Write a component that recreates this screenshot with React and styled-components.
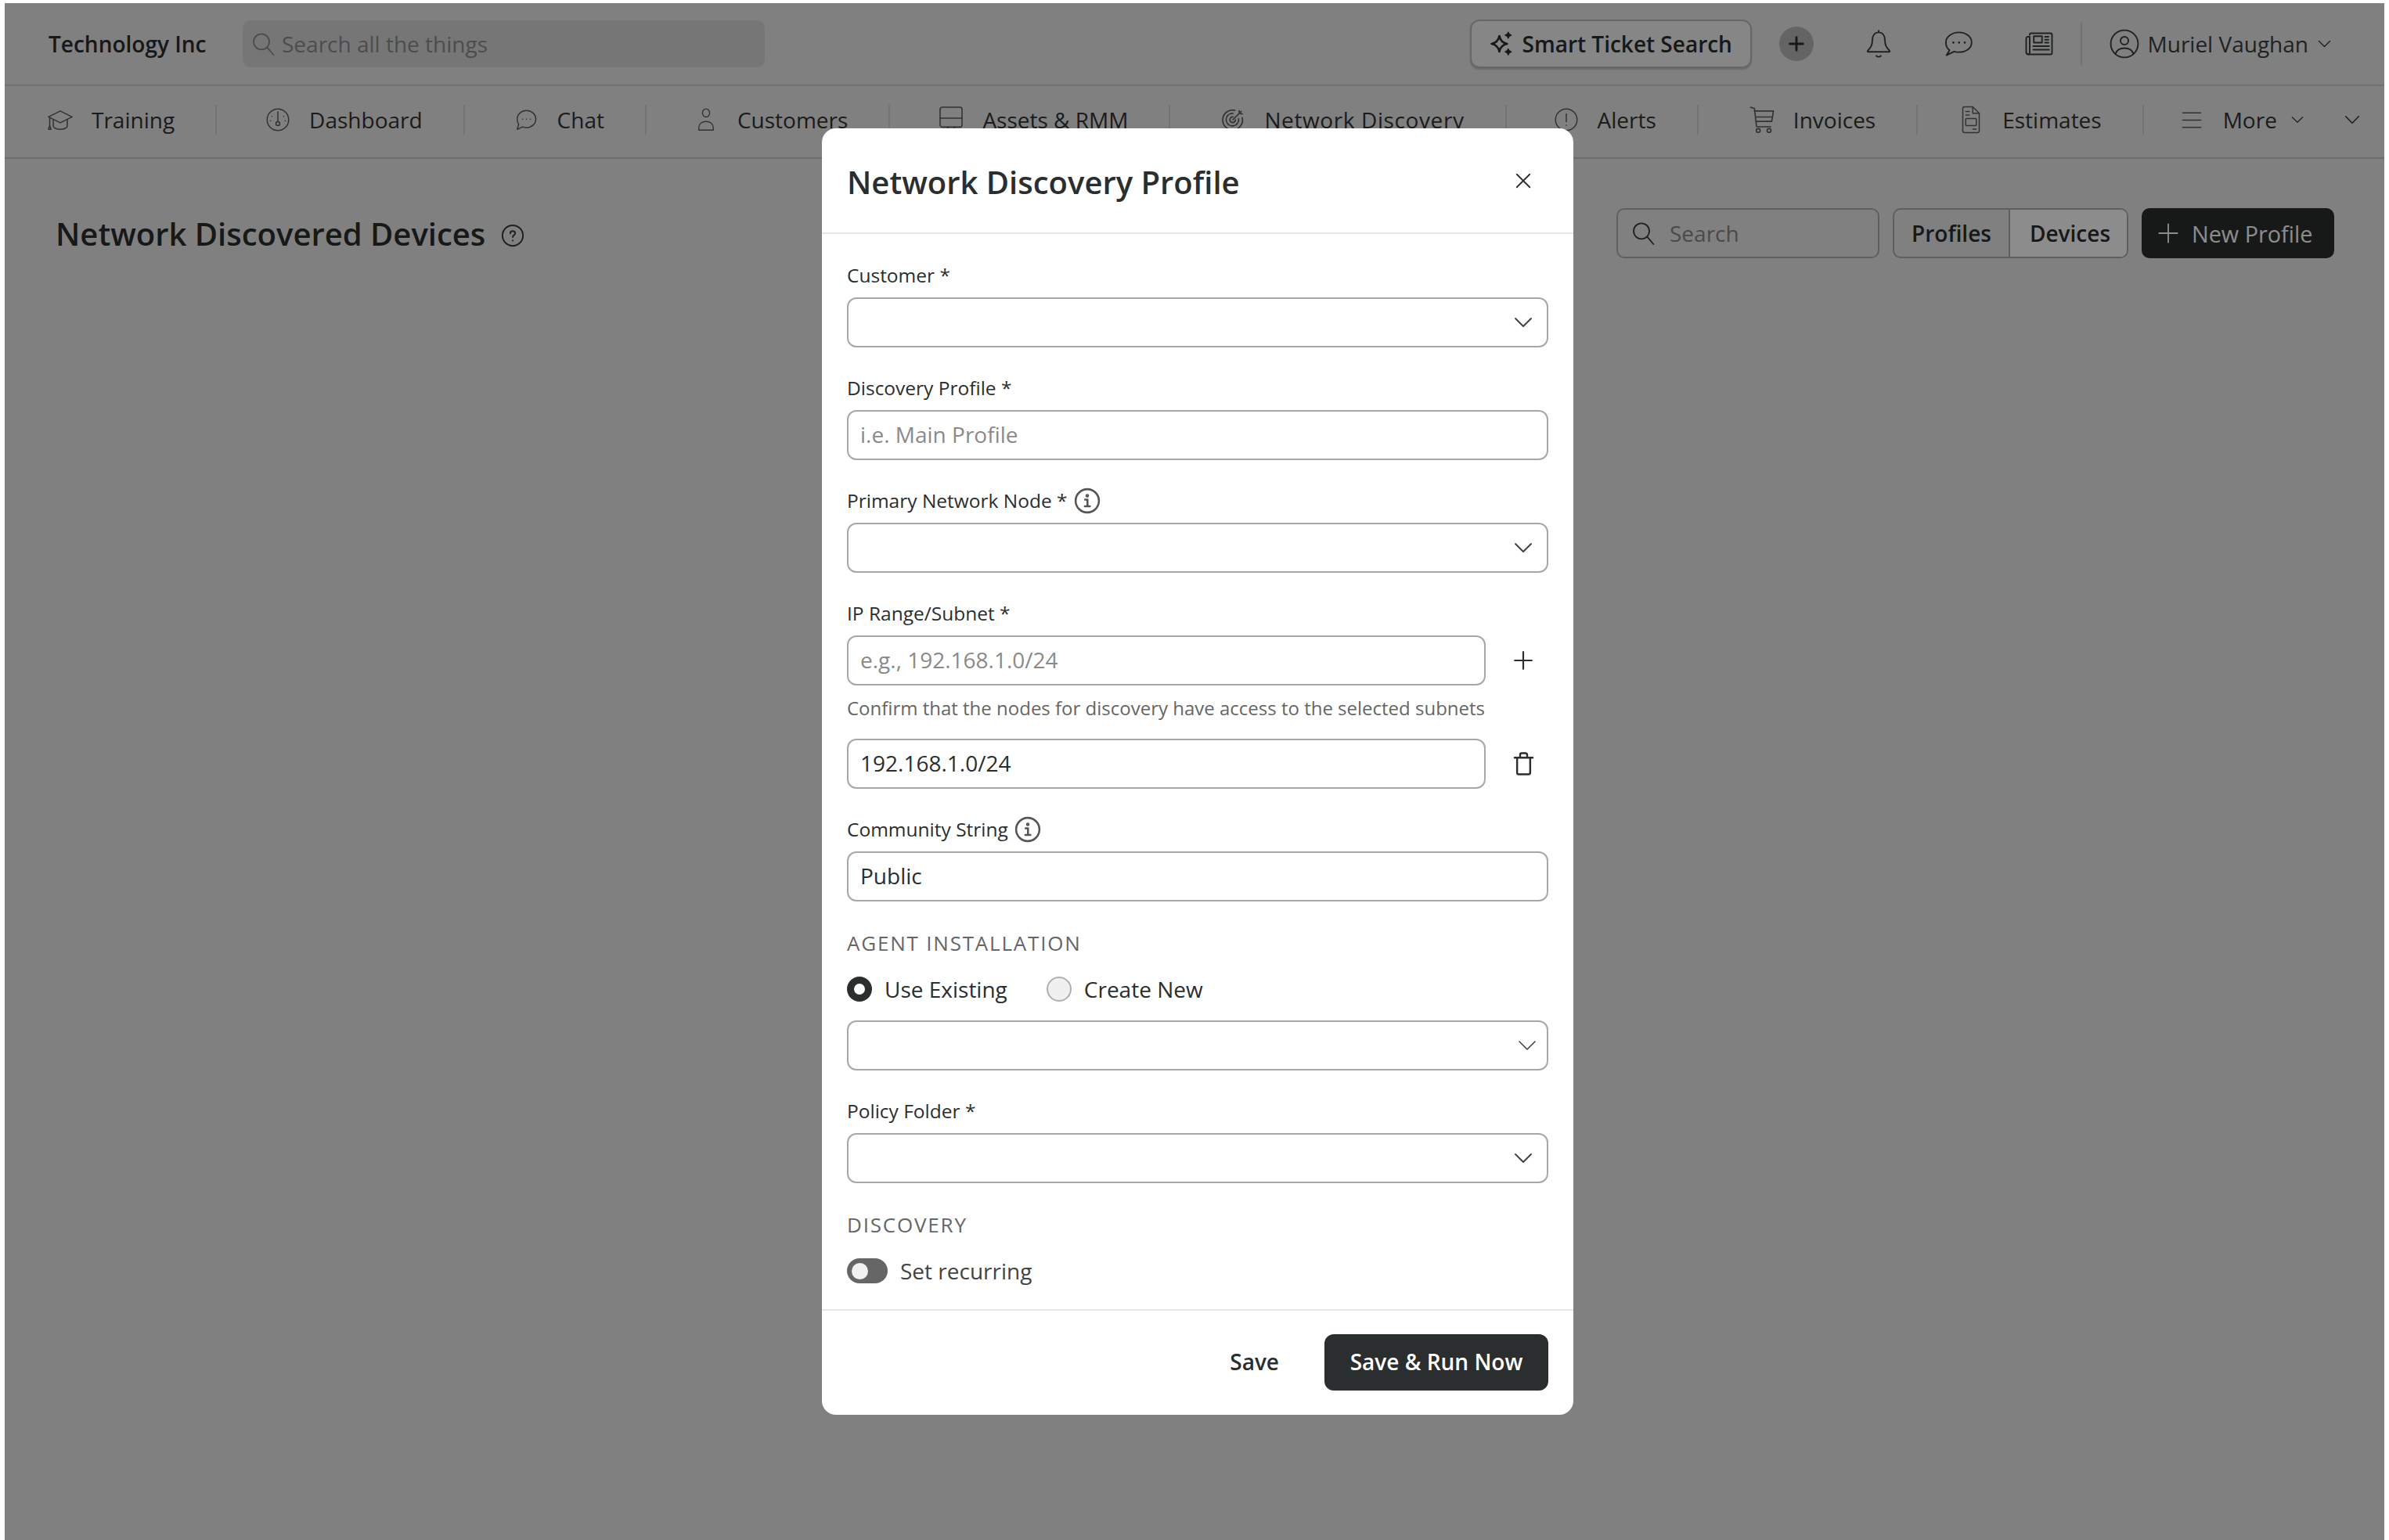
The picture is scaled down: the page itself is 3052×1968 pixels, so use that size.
import React from 'react';
import styled, { createGlobalStyle } from 'styled-components';

const Global = createGlobalStyle`
  * { box-sizing: border-box; }
  html, body { margin: 0; padding: 0; background: #fff; }
  body { font-family: "Open Sans", "Liberation Sans", sans-serif; color: #2a2e2e; }
  #root { padding: 4px 6px 0; }
`;

const Shell = styled.div`
  position: relative; height: 1964px; overflow: hidden; background: #e9e9e9;
`;
const TopBar = styled.header`
  display: flex; align-items: center; height: 106px; padding: 0 68px 0 56px;
  border-bottom: 2px solid #cfcfcf;
`;
const Brand = styled.div`
  width: 200px; margin-right: 48px; font-size: 28px; font-weight: 600; white-space: nowrap; color: #2a2e2e;
`;
const GlobalSearch = styled.div`
  display: flex; align-items: center; gap: 8px; width: 667px; height: 60px; padding: 0 10px;
  background: #d8d8d8; border-radius: 10px; font-size: 28px; color: #8c8c8c;
`;
const TopRight = styled.div`
  margin-left: auto; display: flex; align-items: center; height: 100%;
`;
const SmartButton = styled.div`
  display: flex; align-items: center; gap: 9px; width: 360px; height: 62px; padding-left: 22px;
  border: 2px solid #bcbcbc; border-radius: 12px; background: #f4f4f4; font-size: 28px; font-weight: 600;
  white-space: nowrap; box-shadow: 0 2px 2px rgba(0,0,0,.18);
`;
const PlusCircle = styled.div`
  display: flex; align-items: center; justify-content: center; width: 44px; height: 44px; margin: 0 66px 0 35px;
  border-radius: 50%; background: #b6b6b6; color: #2a2e2e;
`;
const IconRow = styled.div`
  display: flex; align-items: center; gap: 66px; color: #3a3e3e;
`;
const VRule = styled.div`
  width: 2px; height: 56px; margin: 0 35px; background: #d0d0d0;
`;
const UserName = styled.div`
  display: flex; align-items: center; gap: 12px; margin-left: 11px; font-size: 28px; color: #3a3e3e; white-space: nowrap;
`;
const Nav = styled.nav`
  display: flex; align-items: center; height: 93px; padding: 0 40px 5px 53px; border-bottom: 2px solid #c6c6c6;
`;
const NavItem = styled.div`
  display: flex; align-items: center; gap: 22px; height: 38px; padding: 0 52px 0 ${p => p.$lead ?? 60}px;
  border-left: 2px solid #d2d2d2; font-size: 28px; color: #333; white-space: nowrap;
  font-weight: ${p => (p.$active ? 500 : 400)};
  letter-spacing: ${p => (p.$active ? '.6px' : '0')};
  &:first-child { padding-left: 0; border-left: 0; }
`;
const NavIcon = styled.span`
  display: flex; align-items: center; justify-content: center; flex: none; width: 36px; color: #5c5c5c;
`;
const NavTail = styled.div`
  margin-left: auto; color: #333; display: flex;
`;
const NavMoreChevron = styled.span`
  display: flex; margin-left: -4px; color: #444;
`;
const PageHead = styled.section`
  display: flex; align-items: center; justify-content: space-between; height: 64px; margin-top: 63px; padding: 0 64px 0 65px;
`;
const Title = styled.h1`
  display: flex; align-items: center; gap: 20px; margin: 0; font-size: 40px; font-weight: 600; color: #2a2e2e; white-space: nowrap;
  svg { margin-top: 6px; color: #3a3e3e; }
`;
const HeadTools = styled.div`
  display: flex; align-items: center; gap: 17px;
`;
const PageSearch = styled.div`
  display: flex; align-items: center; gap: 18px; width: 336px; height: 64px; padding: 0 16px;
  border: 2px solid #aeaeae; border-radius: 10px; font-size: 28px; color: #888;
  svg { color: #3a3e3e; flex: none; }
`;
const Segment = styled.div`
  display: flex; width: 301px; height: 64px; border: 2px solid #aeaeae; border-radius: 10px; overflow: hidden;
`;
const SegmentOption = styled.div`
  display: flex; align-items: center; justify-content: center; flex: ${p => p.$w}px 0 0; font-size: 28px; font-weight: 600;
  background: ${p => (p.$on ? '#ffffff' : 'transparent')};
  border-left: ${p => (p.$on ? '2px solid #aeaeae' : '0')};
`;
const NewButton = styled.div`
  display: flex; align-items: center; gap: 16px; width: 246px; height: 64px; padding-left: 20px;
  background: #2a2e2e; border-radius: 10px; color: #fff; font-size: 28.8px; white-space: nowrap;
`;
const Overlay = styled.div`
  position: absolute; inset: 0; display: flex; justify-content: center; align-items: flex-start;
  padding: 160px 0 0 8px; background: rgba(0,0,0,.45);
`;
const Modal = styled.div`
  display: flex; flex-direction: column; width: 960px; height: 1644px; background: #fff; border-radius: 18px; overflow: hidden;
`;
const ModalHead = styled.div`
  display: flex; align-items: center; justify-content: space-between; height: 135px; padding: 3px 32px 0;
  border-bottom: 2px solid #e6e6e6; flex: none;
`;
const ModalTitle = styled.h2`
  margin: 0; font-size: 40px; font-weight: 600; color: #2a2e2e; white-space: nowrap;
`;
const CloseBox = styled.div`
  display: flex; width: 28px; justify-content: center; margin: 0 18px 2px 0; color: #2a2e2e;
`;
const ModalBody = styled.div`
  flex: 1; display: flex; flex-direction: column; padding: 39px 32px 0;
`;
const Field = styled.div`
  display: flex; flex-direction: column; margin-bottom: 38px;
`;
const Label = styled.label`
  display: flex; align-items: center; gap: 8px; height: 28px; padding-bottom: 2px; margin-bottom: 14px; font-size: 24.5px; color: #2a2e2e; white-space: nowrap;
  svg { color: #555; flex: none; margin-top: 2px; }
`;
const Box = styled.div`
  display: flex; align-items: center; justify-content: space-between; height: 64px; padding: 0 15px 2px;
  width: ${p => (p.$short ? '816px' : '100%')};
  border: 2px solid #a8a8a8; border-radius: 12px; font-size: 28px; color: ${p => (p.$ph ? '#8a8a8a' : '#2a2e2e')};
  svg { color: #444; margin-right: ${p => p.$chev ?? 0}px; margin-top: 2px; }
`;
const RangeRow = styled.div`
  display: flex; align-items: center; justify-content: space-between;
`;
const RowAction = styled.div`
  display: flex; justify-content: center; width: 36px; margin-right: 14px; color: #2a2e2e;
`;
const Helper = styled.div`
  height: 32px; margin: 13px 0 23px; font-size: 24px; line-height: 32px; color: #666; white-space: nowrap;
`;
const SectionLabel = styled.div`
  height: 30px; line-height: 30px; font-size: 26px; font-weight: 500; letter-spacing: 1.8px; color: #666; white-space: nowrap;
`;
const RadioRow = styled.div`
  display: flex; align-items: center; gap: 50px; height: 32px; margin: ${p => p.$m};
`;
const RadioItem = styled.div`
  display: flex; align-items: center; gap: 16px; font-size: 28px; color: #2a2e2e; white-space: nowrap;
`;
const RadioDot = styled.span`
  display: block; width: 32px; height: 32px; border-radius: 50%;
  background: ${p => (p.$on ? '#fff' : '#f0f0f0')};
  border: ${p => (p.$on ? '9px solid #2a2e2e' : '2px solid #b0b0b0')};
`;
const ToggleRow = styled.div`
  display: flex; align-items: center; gap: 16px; height: 32px; margin-top: 28px; font-size: 28px; color: #444; white-space: nowrap;
`;
const Toggle = styled.span`
  display: flex; align-items: center; width: 52px; height: 32px; padding-left: 6px; border-radius: 16px; background: #666;
  &::before { content: ""; width: 21px; height: 21px; border-radius: 50%; background: #f2f2f2; }
`;
const ModalFoot = styled.div`
  display: flex; align-items: center; justify-content: flex-end; gap: 58px; height: 135px; padding: 0 32px 2px;
  border-top: 2px solid #e6e6e6; flex: none;
`;
const GhostButton = styled.div`
  font-size: 28px; font-weight: 600; color: #2a2e2e; padding-bottom: 2px;
`;
const PrimaryButton = styled.div`
  display: flex; align-items: center; justify-content: center; width: 286px; height: 72px; padding-bottom: 2px; background: #2a2e2e; border-radius: 12px;
  color: #fff; font-size: 28px; font-weight: 600; white-space: nowrap;
`;

const Svg = ({ s = 24, w, h, sw = 1.5, vb = '0 0 24 24', children }) => (
  <svg width={w ?? s} height={h ?? s} viewBox={vb} fill="none" stroke="currentColor" strokeWidth={sw} strokeLinecap="round" strokeLinejoin="round">
    {children}
  </svg>
);
const Chevron = ({ w = 24, h = 14, sw = 2 }) => (
  <Svg w={w} h={h} vb="0 0 24 14" sw={sw}><path d="M2 2l10 10L22 2" /></Svg>
);
const SearchIcon = ({ s = 32 }) => (
  <Svg s={s} sw={1.4}><circle cx="10.500" cy="10" r="7.500" /><path d="M16 15.500l6 7" /></Svg>
);
const InfoIcon = () => (
  <Svg s={34} sw={1.8}><circle cx="12" cy="12" r="10.500" /><circle cx="12" cy="7.400" r=".7" /><path d="M10 11h2.200v6M9.800 17h4.600" /></Svg>
);
const Cap = () => (
  <Svg w={38} h={33} vb="0 0 26 24" sw={1.1}><path d="M13 3.500L24 9l-11 5.500L2 9z" /><path d="M6.500 11.500v6c0 1.600 3 3 6.500 3s6.500-1.400 6.500-3v-6" /><path d="M3.200 10v7" /><path d="M2 20.500l1.200-3.500 1.200 3.500z" /></Svg>
);
const Gauge = () => (
  <Svg s={30} vb="0 0 24 24" sw={1.2}><circle cx="12" cy="12" r="11" /><path d="M12 4v10" /><circle cx="12" cy="16" r="2" /><path d="M6 8.500v.1M18 8.500v.1M4.500 13v.1M19.500 13v.1" /></Svg>
);
const ChatNav = () => (
  <Svg s={30} sw={1.2}><path d="M12.500 2.500c5.200 0 9.500 3.900 9.500 8.800s-4.300 8.800-9.500 8.800c-1.300 0-2.700-.3-3.900-.8L3 21.800l1.500-5.200C3.400 15.100 3 13.200 3 11.300c0-4.900 4.300-8.800 9.500-8.800z" /><path d="M8.500 11.300v.1M12.500 11.300v.1M16.500 11.300v.1" /></Svg>
);
const Person = () => (
  <Svg w={26} h={30} vb="0 0 22 26" sw={1.2}><ellipse cx="11" cy="5.500" rx="4" ry="4.500" /><path d="M3 24.500v-3c0-4 3.500-6.500 8-6.500s8 2.500 8 6.500v3z" /></Svg>
);
const Monitor = () => (
  <Svg w={32} h={36} vb="0 0 24 27" sw={1.2}><rect x="1.500" y="1.500" width="21" height="19" rx="2" /><path d="M1.500 12h21M9 20.500l-1 5M15 20.500l1 5" /></Svg>
);
const Target = () => (
  <Svg s={32} sw={1.3}><path d="M21 10a9.500 9.500 0 1 1-7-7" /><path d="M17.500 11a6 6 0 1 1-5-5" strokeDasharray="3 1.400" /><path d="M14.500 12a2.700 2.700 0 1 1-2.500-2.700" /><path d="M12 12l8-8M18 3.500l.5 2.500 2.500.5" /></Svg>
);
const AlertIcon = () => (
  <Svg s={30} sw={1.2}><circle cx="12" cy="12" r="11" /><path d="M12 6v8M12 17.500v.2" /></Svg>
);
const Cart = () => (
  <Svg w={34} h={36} vb="0 0 24 26" sw={1.2}><path d="M1.500 1.500l3.500 1 2 17h13" /><path d="M5 5h17.500l-1.500 9.500H6.200" /><path d="M6.500 10.500h15" /><circle cx="8.500" cy="23" r="1.800" /><circle cx="18.500" cy="23" r="1.800" /></Svg>
);
const DocIcon = () => (
  <Svg w={24} h={36} vb="0 0 16 24" sw={1}><path d="M2.500 1h7L15 6.500v15a1.500 1.500 0 0 1-1.500 1.500h-11A1.500 1.500 0 0 1 1 21.500v-19A1.500 1.500 0 0 1 2.500 1z" /><path d="M9.500 1v5.500H15M3.500 5h3M3.500 8h3" /><rect x="3.500" y="11" width="9" height="6" rx=".6" /><path d="M9.500 20h3" /></Svg>
);
const Lines = () => (
  <Svg w={28} h={25} vb="0 0 24 20" sw={1.3}><path d="M2 2h20M2 10h20M2 18h20" /></Svg>
);
const Sparkle = () => (
  <Svg s={34} sw={1.9}><path d="M9.500 5c.8 4.200 2.800 6.200 7 7-4.200.8-6.200 2.800-7 7-.8-4.200-2.800-6.200-7-7 4.200-.8 6.200-2.800 7-7z" /><path d="M17.500 1.500c.3 1.700 1 2.400 2.700 2.700-1.700.3-2.400 1-2.700 2.700-.3-1.700-1-2.400-2.700-2.700 1.700-.3 2.400-1 2.700-2.700zM17.500 16.500c.3 1.700 1 2.400 2.700 2.700-1.700.3-2.400 1-2.700 2.700-.3-1.700-1-2.400-2.700-2.700 1.700-.3 2.400-1 2.700-2.700z" fill="currentColor" strokeWidth="1" /></Svg>
);
const PlusGlyph = ({ s = 24, sw = 2 }) => <Svg s={s} sw={sw}><path d="M12 2v20M2 12h20" /></Svg>;
const Bell = () => (
  <Svg w={34} h={38} vb="0 0 22 26" sw={1.3}><path d="M11 1.500V3M11 3c-3.600 0-5.500 3-5.500 6.500 0 5-1.500 7-4 9.500-.4.500-.2 1 .5 1h18c.7 0 .9-.5.500-1-2.500-2.500-4-4.500-4-9.500C16.500 6 14.600 3 11 3z" /><path d="M9 23.500c1 1.200 3 1.200 4 0" /></Svg>
);
const ChatTop = () => (
  <Svg w={38} h={34} vb="0 0 26 23" sw={1.3}><path d="M13.500 1.500c6 0 11 3.700 11 8.800s-5 8.500-11 8.500c-1.500 0-3-.2-4.300-.6L2.500 21.500l2.700-4.300C3 15.500 2 13 2 10.300c0-5.100 5.500-8.800 11.500-8.800z" /><path d="M8.500 10.300v.1M13.500 10.300v.1M18.500 10.300v.1" strokeWidth="1.800" /></Svg>
);
const News = () => (
  <Svg w={36} h={32} vb="0 0 24 21" sw={1.3}><path d="M4 2.800a1.300 1.300 0 0 1 1.300-1.300h16.400A1.300 1.300 0 0 1 23 2.800v15.400a1.300 1.300 0 0 1-1.300 1.300H3" /><path d="M4 4.500H2.500A1.500 1.500 0 0 0 1 6v11.500a2 2 0 0 0 2 2 1.500 1.500 0 0 0 1-1.500z" /><rect x="7.500" y="4" width="7" height="5.500" /><path d="M17 4.500h3M17 7h3M17 9.500h3M7 12.500h13.500M7 15.500h13.500" /></Svg>
);
const UserCircle = () => (
  <Svg s={38} sw={1.2}><circle cx="12" cy="12" r="11" /><ellipse cx="12" cy="9.500" rx="3.200" ry="3.200" /><path d="M4.800 20c1-3 3.600-4.500 7.200-4.500s6.200 1.500 7.200 4.500" /></Svg>
);
const HelpIcon = () => (
  <Svg s={30} sw={1.6}><circle cx="12" cy="12" r="10.500" /><path d="M9.500 9.800c0-1.500 1.100-2.500 2.500-2.500s2.500 1 2.500 2.300c0 2-2.500 2-2.500 4" /><path d="M12 17v.1" /></Svg>
);
const CloseIcon = () => <Svg s={22} sw={2}><path d="M3 3l18 18M21 3L3 21" /></Svg>;
const Trash = () => (
  <Svg w={27} h={32} vb="0 0 21 24" sw={1.9}><path d="M1.500 6h18M7 6V3a1.500 1.500 0 0 1 1.500-1.500h4A1.500 1.500 0 0 1 14 3v3M4 6v15a1.500 1.500 0 0 0 1.500 1.500h10A1.500 1.500 0 0 0 17 21V6" /></Svg>
);

const navItems = [
  { label: 'Training', icon: <Cap /> },
  { label: 'Dashboard', icon: <Gauge /> },
  { label: 'Chat', icon: <ChatNav /> },
  { label: 'Customers', icon: <Person />, lead: 58 },
  { label: 'Assets & RMM', icon: <Monitor /> },
  { label: 'Network Discovery', icon: <Target />, lead: 62, active: true },
  { label: 'Alerts', icon: <AlertIcon />, lead: 58 },
  { label: 'Invoices', icon: <Cart />, lead: 63 },
  { label: 'Estimates', icon: <DocIcon />, lead: 50 },
];

export default function App() {
  return (
    <>
      <Global />
      <Shell>
        <TopBar>
          <Brand>Technology Inc</Brand>
          <GlobalSearch><SearchIcon />Search all the things</GlobalSearch>
          <TopRight>
            <SmartButton><Sparkle />Smart Ticket Search</SmartButton>
            <PlusCircle><PlusGlyph s={20} sw={3.4} /></PlusCircle>
            <IconRow><Bell /><ChatTop /><News /></IconRow>
            <VRule />
            <IconRow><UserCircle /></IconRow>
            <UserName>Muriel Vaughan <Chevron w={17} h={10} sw={2} /></UserName>
          </TopRight>
        </TopBar>
        <Nav>
          {navItems.map(({ label, icon, lead, active }) => (
            <NavItem key={label} $lead={lead} $active={active}><NavIcon>{icon}</NavIcon>{label}</NavItem>
          ))}
          <NavItem $lead={43}><NavIcon><Lines /></NavIcon>More<NavMoreChevron><Chevron w={16} h={10} sw={2} /></NavMoreChevron></NavItem>
          <NavTail><Chevron w={20} h={12} sw={1.8} /></NavTail>
        </Nav>
        <PageHead>
          <Title>Network Discovered Devices <HelpIcon /></Title>
          <HeadTools>
            <PageSearch><SearchIcon />Search</PageSearch>
            <Segment>
              <SegmentOption $w={146}>Profiles</SegmentOption>
              <SegmentOption $w={155} $on>Devices</SegmentOption>
            </Segment>
            <NewButton><PlusGlyph s={28} sw={1.6} />New Profile</NewButton>
          </HeadTools>
        </PageHead>
        <Overlay>
          <Modal>
            <ModalHead>
              <ModalTitle>Network Discovery Profile</ModalTitle>
              <CloseBox><CloseIcon /></CloseBox>
            </ModalHead>
            <ModalBody>
              <Field>
                <Label>Customer *</Label>
                <Box $chev={3}><span /><Chevron /></Box>
              </Field>
              <Field>
                <Label>Discovery Profile *</Label>
                <Box $ph>i.e. Main Profile</Box>
              </Field>
              <Field>
                <Label>Primary Network Node * <InfoIcon /></Label>
                <Box $chev={3}><span /><Chevron /></Box>
              </Field>
              <Field>
                <Label>IP Range/Subnet *</Label>
                <RangeRow>
                  <Box $short $ph>e.g., 192.168.1.0/24</Box>
                  <RowAction><PlusGlyph s={26} sw={2} /></RowAction>
                </RangeRow>
                <Helper>Confirm that the nodes for discovery have access to the selected subnets</Helper>
                <RangeRow>
                  <Box $short>192.168.1.0/24</Box>
                  <RowAction><Trash /></RowAction>
                </RangeRow>
              </Field>
              <Field>
                <Label>Community String <InfoIcon /></Label>
                <Box>Public</Box>
              </Field>
              <SectionLabel>AGENT INSTALLATION</SectionLabel>
              <RadioRow $m="28px 0 24px">
                <RadioItem><RadioDot $on />Use Existing</RadioItem>
                <RadioItem><RadioDot />Create New</RadioItem>
              </RadioRow>
              <Field>
                <Box $chev={-2}><span /><Chevron sw={1.6} /></Box>
              </Field>
              <Field>
                <Label>Policy Folder *</Label>
                <Box $chev={3}><span /><Chevron /></Box>
              </Field>
              <SectionLabel>DISCOVERY</SectionLabel>
              <ToggleRow><Toggle />Set recurring</ToggleRow>
            </ModalBody>
            <ModalFoot>
              <GhostButton>Save</GhostButton>
              <PrimaryButton>Save &amp; Run Now</PrimaryButton>
            </ModalFoot>
          </Modal>
        </Overlay>
      </Shell>
    </>
  );
}
